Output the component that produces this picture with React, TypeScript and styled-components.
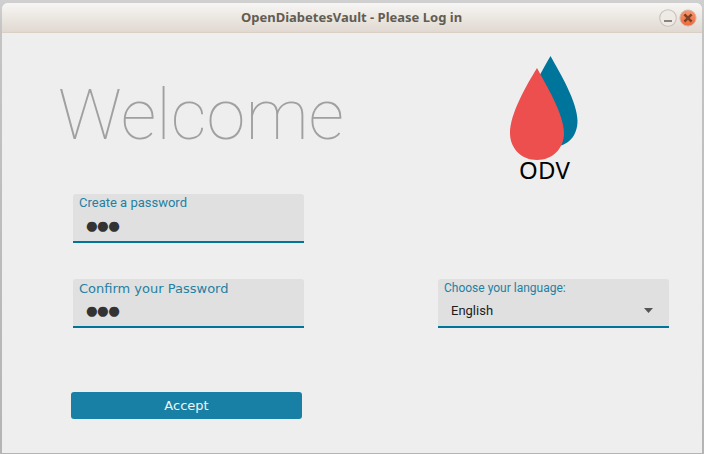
import React from "react";
import styled, { createGlobalStyle } from "styled-components";

const GlobalStyle = createGlobalStyle`
  * { box-sizing: border-box; }
  html, body, #root { height: 100%; }
  body { margin: 0; overflow: hidden; }
  svg { display: block; }
`;

const Desktop = styled.div`
  height: 454px;
  width: 704px;
  padding: 3px 2px 1px;
  background: linear-gradient(#d0d0d0 0, #c4c4c4 30px, #b4b4b4 100%);
`;

const Window = styled.main`
  width: 700px;
  height: 450px;
  display: flex;
  flex-direction: column;
  overflow: hidden;
  border-radius: 6px 6px 0 0;
  background: #eeeeee;
`;

const TitleBar = styled.header`
  flex: 0 0 30px;
  display: grid;
  grid-template-columns: 1fr auto 1fr;
  align-items: center;
  padding: 0 5px 0 4px;
  background: linear-gradient(#f7f6f5, #eae6e0 55%, #e1d8d1);
  border-bottom: 1px solid #dacfc3;
`;

const Title = styled.h1`
  grid-column: 2;
  margin: 0;
  color: #635c53;
  font: 700 13px/29px "Noto Sans", sans-serif;
  letter-spacing: 0;
  white-space: nowrap;
`;

const WindowControls = styled.div`
  display: flex;
  justify-self: end;
  gap: 2px;
`;

const ControlButton = styled.button`
  width: 18px;
  height: 18px;
  padding: 0;
  border: 0;
  background: none;
`;

const Form = styled.form`
  flex: 1;
  display: grid;
  grid-template-columns: 231px 231px;
  grid-template-rows: 161px 85px 113px 27px;
  column-gap: 134px;
  padding-left: 69px;
`;

const Welcome = styled.h2`
  margin: 40px 0 0 -13px;
  color: #a0a0a0;
  font: 100 70.5px/84px Roboto, sans-serif;
  white-space: nowrap;
`;

const Logo = styled.figure`
  margin: 22px 0 0 73px;
  width: 70px;
`;

const LogoText = styled.figcaption`
  margin: -4px 0 0 10px;
  color: #000;
  font: 400 24px/26px "Noto Sans", sans-serif;
  letter-spacing: 0.3px;
`;

const Field = styled.div<{ $column: number }>`
  grid-column: ${(p) => p.$column};
  margin-left: 2px;
  width: 231px;
  height: 49px;
  display: flex;
  flex-direction: column;
  background: #e0e0e0;
  border-bottom: 2px solid #00759c;
  border-radius: 3px 3px 0 0;
`;

const Label = styled.label<{ $face: string; $size: number; $line?: number }>`
  height: 18px;
  padding-left: 6px;
  color: #2381a4;
  font: 400 ${(p) => p.$size}px/${(p) => p.$line ?? 18}px ${(p) => p.$face}, sans-serif;
  white-space: nowrap;
`;

const Secret = styled.span`
  padding-left: 13px;
  color: #333;
  font: 400 13.4px/27px "DejaVu Sans", sans-serif;
  letter-spacing: -0.6px;
`;

const Choice = styled.div`
  display: flex;
  align-items: center;
  justify-content: space-between;
  padding: 0 16px 0 13px;
  color: #1c1c1c;
  font: 400 13px/28px Roboto, sans-serif;

  svg { margin-bottom: 2px; }
`;

const Accept = styled.button`
  width: 231px;
  height: 27px;
  padding: 0;
  border: 0;
  border-radius: 3px;
  background: #1880a5;
  color: #edf5f8;
  font: 400 13px/27px "DejaVu Sans", sans-serif;
`;

function MinimizeIcon() {
  return (
    <svg width="18" height="18" viewBox="0 0 18 18">
      <circle cx="9" cy="9" r="8.3" fill="#eeebe7" stroke="#c9c1b9" strokeWidth="1.1" />
      <rect x="5" y="11" width="8" height="2" fill="#8d8478" />
    </svg>
  );
}

function CloseIcon() {
  return (
    <svg width="18" height="18" viewBox="0 0 18 18">
      <defs>
        <linearGradient id="close-fill" x2="0" y2="1">
          <stop stopColor="#f79a72" />
          <stop offset="1" stopColor="#ee6839" />
        </linearGradient>
      </defs>
      <circle cx="9" cy="9" r="8.1" fill="url(#close-fill)" stroke="#d0bcb0" />
      <path d="M5.4 5.4 12.6 12.6M12.6 5.4 5.4 12.6" stroke="#7c4328" strokeWidth="2.6" />
    </svg>
  );
}

function Drops() {
  return (
    <svg width="70" height="106" viewBox="0 0 70 106">
      <path d="M41.5 1C51 18 68.5 47 68.5 66C68.5 80 60 92 42 92C24 92 15 80 15 65C15 46 32 18 41.5 1Z" fill="#00759b" />
      <path d="M28 13C37 30 55 59 55 78C55 94 43 105 28 105C13 105 1 94 1 78C1 59 17 31 28 13Z" fill="#ed4e4e" />
    </svg>
  );
}

export default function App() {
  return (
    <Desktop>
      <GlobalStyle />
      <Window>
        <TitleBar>
          <Title>OpenDiabetesVault - Please Log in</Title>
          <WindowControls>
            <ControlButton aria-label="Minimize"><MinimizeIcon /></ControlButton>
            <ControlButton aria-label="Close"><CloseIcon /></ControlButton>
          </WindowControls>
        </TitleBar>
        <Form>
          <Welcome>Welcome</Welcome>
          <Logo>
            <Drops />
            <LogoText>ODV</LogoText>
          </Logo>
          <Field $column={1}>
            <Label $face="Roboto" $size={13}>Create a password</Label>
            <Secret>●●●</Secret>
          </Field>
          <Field $column={1}>
            <Label $face='"DejaVu Sans"' $size={13} $line={20}>Confirm your Password</Label>
            <Secret>●●●</Secret>
          </Field>
          <Field $column={2}>
            <Label $face="Roboto" $size={12}>Choose your language:</Label>
            <Choice>
              English
              <svg width="9" height="5" viewBox="0 0 9 5"><path d="M0 0H9L4.5 5Z" fill="#555" /></svg>
            </Choice>
          </Field>
          <Accept type="button">Accept</Accept>
        </Form>
      </Window>
    </Desktop>
  );
}
